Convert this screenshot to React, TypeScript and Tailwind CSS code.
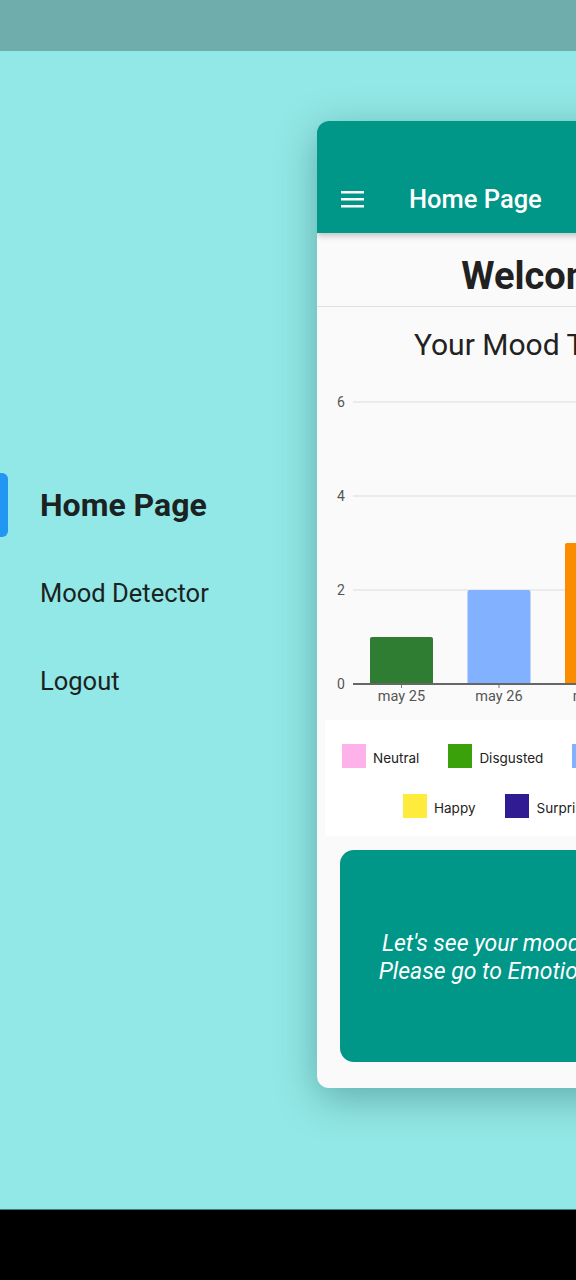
import React from 'react';

const bars = [
  { label: 'may 25', value: 1, color: '#2e7d32' },
  { label: 'may 26', value: 2, color: '#82b1ff' },
  { label: 'may 27', value: 3, color: '#fb8c00' },
  { label: 'may 28', value: 2, color: '#ffb1ea' },
];

const legendRows = [
  [
    { name: 'Neutral', color: '#ffb1ea' },
    { name: 'Disgusted', color: '#3ba10b' },
    { name: 'Sad', color: '#82b1ff' },
    { name: 'Angry', color: '#fb8c00' },
  ],
  [
    { name: 'Happy', color: '#ffeb3b' },
    { name: 'Surprised', color: '#311b92' },
    { name: 'Fearful', color: '#e53935' },
  ],
];

const MoodChart: React.FC = () => {
  const zeroY = 294;
  const unit = 47;
  return (
    <svg width="480" height="320" className="block">
      {[0, 2, 4, 6].map((v) => (
        <g key={v}>
          {v > 0 && <line x1="36" x2="480" y1={zeroY - v * unit} y2={zeroY - v * unit} stroke="#e6e6e6" strokeWidth="1.5" />}
          <text x="24" y={zeroY - v * unit + 5} textAnchor="middle" fontSize="14" fill="#555" fontFamily="Roboto, sans-serif">
            {v}
          </text>
        </g>
      ))}
      {bars.map((b, i) => {
        const x = 53 + i * 97.5;
        const h = b.value * unit;
        return (
          <g key={b.label}>
            <path d={`M${x} ${zeroY} V${zeroY - h + 2} Q${x} ${zeroY - h} ${x + 2} ${zeroY - h} H${x + 61} Q${x + 63} ${zeroY - h} ${x + 63} ${zeroY - h + 2} V${zeroY} Z`} fill={b.color} />
            <line x1={x + 31.5} x2={x + 31.5} y1={zeroY} y2={zeroY + 4} stroke="#777" strokeWidth="1" />
            <text x={x + 31.5} y={zeroY + 17} textAnchor="middle" fontSize="14.5" fill="#555" fontFamily="Roboto, sans-serif">
              {b.label}
            </text>
          </g>
        );
      })}
      <line x1="36" x2="480" y1={zeroY} y2={zeroY} stroke="#666" strokeWidth="2" />
    </svg>
  );
};

const MenuIcon = () => (
  <svg width="24" height="20" viewBox="0 0 24 20" className="block">
    <rect x="0" y="2" width="23" height="2.5" fill="#fff" />
    <rect x="0" y="9" width="23" height="2.5" fill="#fff" />
    <rect x="0" y="16" width="23" height="2.5" fill="#fff" />
  </svg>
);

export default function App() {
  return (
    <div className="w-[576px] h-[1280px] overflow-hidden flex flex-col font-['Roboto',sans-serif]">
      <div className="h-[51px] shrink-0 bg-[#6fadad]" />

      <div className="flex-1 flex bg-[#92e8e6] overflow-hidden">
        {/* drawer menu */}
        <nav className="w-[317px] shrink-0 pt-[410px] flex flex-col">
          <div className="h-[88px] flex items-center relative">
            <div className="absolute left-0 top-[12px] h-[64px] w-[8px] rounded-r-[6px] bg-[#2196f3]" />
            <span className="pl-[40px] text-[32px] font-bold text-[#1b2222]">Home Page</span>
          </div>
          <div className="h-[88px] flex items-center">
            <span className="pl-[40px] text-[25.5px] text-[#1b2222]">Mood Detector</span>
          </div>
          <div className="h-[88px] flex items-center">
            <span className="pl-[40px] text-[25.5px] text-[#1b2222]">Logout</span>
          </div>
        </nav>

        {/* scaled home screen */}
        <div className="pt-[70px] shrink-0">
          <div className="w-[480px] h-[967px] rounded-[12px] overflow-hidden bg-[#fafafa] shadow-[0_10px_40px_rgba(0,60,60,0.35)] flex flex-col">
            <header className="h-[112px] shrink-0 bg-[#009688] pt-[42px] relative z-10 shadow-[0_3px_6px_rgba(0,0,0,0.22)]">
              <div className="h-[70px] flex items-center">
                <div className="pl-[24px] w-[92px] pt-[1px]">
                  <MenuIcon />
                </div>
                <h1 className="text-[25.5px] font-medium text-white pt-[2px]">Home Page</h1>
              </div>
            </header>

            <div className="h-[74px] shrink-0 pt-[13px] flex items-center justify-center border-b border-[#e0e0e0]">
              <h2 className="text-[38px] font-bold text-[#212121] whitespace-nowrap">Welcome :)</h2>
            </div>

            <h3 className="pt-[21px] text-center text-[30px] leading-[34px] text-[#222] whitespace-nowrap">Your Mood Timetable</h3>

            <div className="mt-[28px]">
              <MoodChart />
            </div>

            <div className="mt-[10px] mx-[8px] h-[116px] bg-white pt-[24px] flex flex-col gap-[26px] font-['Inter',sans-serif] text-[13.5px] text-[#222]">
              {legendRows.map((row, ri) => (
                <div key={ri} className={ri === 0 ? 'flex pl-[17px] gap-x-[29px]' : 'flex pl-[78px] gap-x-[30px]'}>
                  {row.map((item) => (
                    <div key={item.name} className="flex items-center gap-[7px] whitespace-nowrap">
                      <span className="w-[24px] h-[24px]" style={{ backgroundColor: item.color }} />
                      <span className="pt-[4px]">{item.name}</span>
                    </div>
                  ))}
                </div>
              ))}
            </div>

            <div className="mt-[14px] mx-[23px] h-[212px] rounded-[14px] bg-[#009688] flex items-center justify-center">
              <p className="text-center italic text-[23px] leading-[28px] text-white whitespace-nowrap pt-[4px]">
                Let's see your mood for this month.
                <br />
                Please go to Emotion Detector page
              </p>
            </div>
          </div>
        </div>
      </div>

      <div className="h-[71px] shrink-0 bg-black border-t border-[#3f7c7c]" />
    </div>
  );
}
